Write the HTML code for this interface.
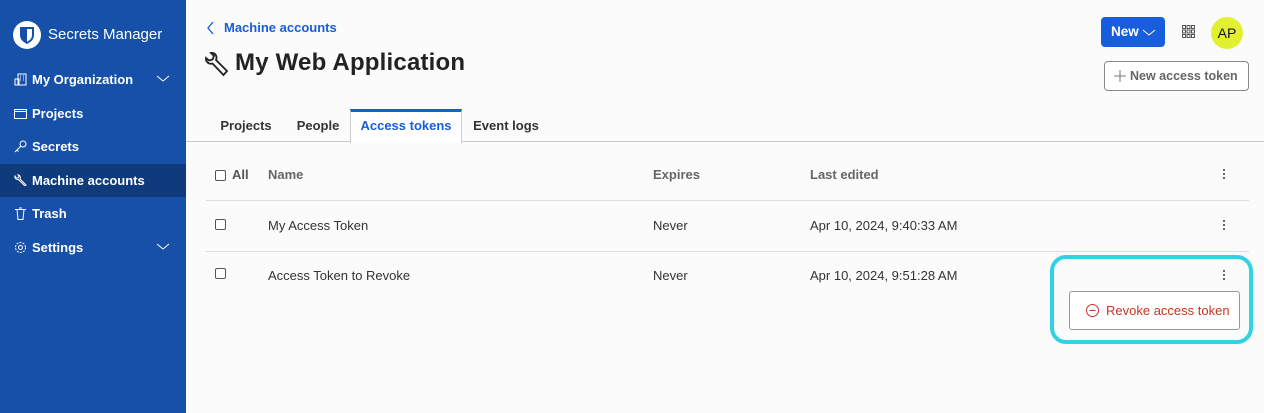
<!DOCTYPE html>
<html><head><style>
*{box-sizing:border-box;margin:0;padding:0}
body{width:1264px;height:413px;overflow:hidden;font-family:"Liberation Sans",sans-serif;background:#fbfbfb;position:relative;color:#212529}
.sb{position:absolute;left:0;top:0;width:186px;height:413px;background:#1650a9;color:#fff}
.logo{position:absolute;left:13px;top:21px;width:28px;height:28px;border-radius:50%;background:#fff}
.logo svg{position:absolute;left:7px;top:6px}
.brand{position:absolute;left:48px;top:26px;font-size:15px;color:#fff}
.it{position:absolute;left:0;width:186px;height:33px;font-weight:bold;font-size:13px;line-height:33px;padding-left:32px}
.it.act{background:#0f3b7c}
.ic{position:absolute;left:14px;top:10px;width:13px;height:13px}
.chev{position:absolute;right:16px;top:10px}
.abs{position:absolute}
.tab{position:absolute;top:110px;height:32px;line-height:32px;font-size:13px;font-weight:bold;color:#333;text-align:center}
.th{position:absolute;top:167px;font-size:13px;font-weight:bold;color:#666}
.td{position:absolute;font-size:13px;color:#333}
.cb{position:absolute;width:11px;height:11px;border:1px solid #555;border-radius:2px;background:#fff}
.dots{position:absolute;width:3px;font-size:0}
.dots i{display:block;width:2px;height:2px;background:#333;border-radius:50%;margin-bottom:2px}
</style></head><body>
<div class="sb">
<div class="logo"><svg width="14" height="17" viewBox="0 0 14 17"><path d="M0 0h14v8c0 5-4 7.5-7 9-3-1.5-7-4-7-9z" fill="#1650a9"/><path d="M7 2h5v6c0 3.5-2.5 5.5-5 6.8z" fill="#fff"/></svg></div>
<div class="brand">Secrets Manager</div>
<div class="it" style="top:63px"><svg class="ic" viewBox="0 0 13 13" fill="none" stroke="#fff" stroke-width="1"><rect x="4" y="1" width="8" height="11"/><rect x="1" y="6" width="4" height="6"/><path d="M6 3h1M9 3h1M6 5h1M9 5h1M6 7h1M9 7h1"/></svg>My Organization<svg class="chev" width="14" height="10" viewBox="0 0 14 10"><path d="M1 3l6 5 6-5" stroke="#fff" fill="none"/></svg></div>
<div class="it" style="top:97px"><svg class="ic" viewBox="0 0 13 13" fill="none" stroke="#fff"><rect x="0.5" y="2.5" width="12" height="9"/><path d="M1 4.5h11"/></svg>Projects</div>
<div class="it" style="top:130px"><svg class="ic" viewBox="0 0 13 13" fill="none" stroke="#fff"><circle cx="9" cy="4" r="3"/><path d="M7 6l-6 6M3 10l1.5 1.5"/></svg>Secrets</div>
<div class="it act" style="top:164px"><svg class="ic" viewBox="0 0 13 13" fill="none" stroke="#fff"><path d="M12 11L6 5c1-2 0-4-2-4.3L5 2.5 4 4 2 3.8 1 2C0.5 4 2 6 4.5 5.5l6 6z"/></svg>Machine accounts</div>
<div class="it" style="top:197px"><svg class="ic" viewBox="0 0 13 13" fill="none" stroke="#fff"><path d="M1 2.5h11M3 2.5l1 10h5l1-10M5 1h3"/></svg>Trash</div>
<div class="it" style="top:231px"><svg class="ic" viewBox="0 0 13 13" fill="none" stroke="#fff"><circle cx="6.5" cy="6.5" r="2"/><circle cx="6.5" cy="6.5" r="5" stroke-dasharray="2 1.2"/></svg>Settings<svg class="chev" width="14" height="10" viewBox="0 0 14 10"><path d="M1 3l6 5 6-5" stroke="#fff" fill="none"/></svg></div>
</div>

<svg class="abs" style="left:206px;top:21px" width="9" height="14" viewBox="0 0 9 14"><path d="M7 1L2 7l5 6" stroke="#175ddc" fill="none" stroke-width="1.3"/></svg>
<div class="abs" style="left:224px;top:20px;font-size:13px;font-weight:bold;color:#175ddc">Machine accounts</div>
<svg class="abs" style="left:204px;top:51px" width="26" height="26" viewBox="0 0 26 26" fill="none" stroke="#222" stroke-width="1.8"><path d="M23 20L12 9c1.5-3.5-.5-7.5-5-7L10 5 8.5 8.5 5 9.5 2 7c-.5 4 3 6.5 6.5 5.5L19.5 24z"/></svg>
<div class="abs" style="left:235px;top:49px;font-size:24px;font-weight:bold;color:#222;letter-spacing:0.2px">My Web Application</div>

<div class="abs" style="left:1101px;top:17px;width:64px;height:30px;background:#175ddc;border-radius:4px;color:#fff;font-weight:bold;font-size:13.5px;line-height:30px;padding-left:10px">New<svg style="position:absolute;left:41px;top:11px" width="14" height="9" viewBox="0 0 14 9"><path d="M1 2l6 5 6-5" stroke="#fff" fill="none"/></svg></div>
<svg class="abs" style="left:1182px;top:25px" width="13" height="13" viewBox="0 0 13 13" fill="none" stroke="#555"><rect x=".5" y=".5" width="3" height="3"/><rect x="5" y=".5" width="3" height="3"/><rect x="9.5" y=".5" width="3" height="3"/><rect x=".5" y="5" width="3" height="3"/><rect x="5" y="5" width="3" height="3"/><rect x="9.5" y="5" width="3" height="3"/><rect x=".5" y="9.5" width="3" height="3"/><rect x="5" y="9.5" width="3" height="3"/><rect x="9.5" y="9.5" width="3" height="3"/></svg>
<div class="abs" style="left:1211px;top:17px;width:32px;height:32px;border-radius:50%;background:#e2f032;font-size:14px;line-height:32px;text-align:center;color:#111">AP</div>
<div class="abs" style="left:1104px;top:61px;width:145px;height:30px;border:1px solid #888;border-radius:4px;background:#fff;font-size:12.5px;font-weight:bold;color:#666;line-height:28px;padding-left:25px">New access token<svg style="position:absolute;left:9px;top:8px" width="12" height="12" viewBox="0 0 12 12"><path d="M6 0v12M0 6h12" stroke="#777"/></svg></div>

<div class="tab" style="left:206px;width:80px">Projects</div>
<div class="tab" style="left:286px;width:64px">People</div>
<div class="abs" style="left:350px;top:109px;width:112px;height:34px;background:#fff;border:1px solid #ccc;border-top:3px solid #175ddc;border-bottom:none"></div>
<div class="tab" style="left:350px;width:112px;color:#175ddc">Access tokens</div>
<div class="tab" style="left:462px;width:88px">Event logs</div>
<div class="abs" style="left:186px;top:141px;width:1078px;height:1px;background:#ccc"></div>
<div class="abs" style="left:351px;top:141px;width:110px;height:1px;background:#fff"></div>

<div class="cb" style="left:215px;top:170px"></div>
<div class="th" style="left:232px;color:#555">All</div>
<div class="th" style="left:268px">Name</div>
<div class="th" style="left:653px">Expires</div>
<div class="th" style="left:810px">Last edited</div>
<div class="dots" style="left:1223px;top:169px"><i></i><i></i><i></i></div>
<div class="abs" style="left:206px;top:200px;width:1043px;height:1px;background:#ddd"></div>

<div class="cb" style="left:215px;top:219px"></div>
<div class="td" style="left:268px;top:218px">My Access Token</div>
<div class="td" style="left:653px;top:218px">Never</div>
<div class="td" style="left:810px;top:218px">Apr 10, 2024, 9:40:33 AM</div>
<div class="dots" style="left:1223px;top:220px"><i></i><i></i><i></i></div>
<div class="abs" style="left:206px;top:251px;width:1043px;height:1px;background:#ddd"></div>

<div class="cb" style="left:215px;top:268px"></div>
<div class="td" style="left:268px;top:268px">Access Token to Revoke</div>
<div class="td" style="left:653px;top:268px">Never</div>
<div class="td" style="left:810px;top:268px">Apr 10, 2024, 9:51:28 AM</div>
<div class="dots" style="left:1223px;top:270px"><i></i><i></i><i></i></div>

<div class="abs" style="left:1050px;top:255px;width:203px;height:89px;border:4px solid #2fd3e3;border-radius:16px"></div>
<div class="abs" style="left:1069px;top:291px;width:171px;height:39px;border:1px solid #999;border-radius:3px;background:#fff;font-size:13px;color:#c83522;line-height:37px;padding-left:36px">Revoke access token<svg style="position:absolute;left:16px;top:12px" width="13" height="13" viewBox="0 0 13 13" fill="none" stroke="#c83522"><circle cx="6.5" cy="6.5" r="6"/><path d="M3.5 6.5h6"/></svg></div>
</body></html>
